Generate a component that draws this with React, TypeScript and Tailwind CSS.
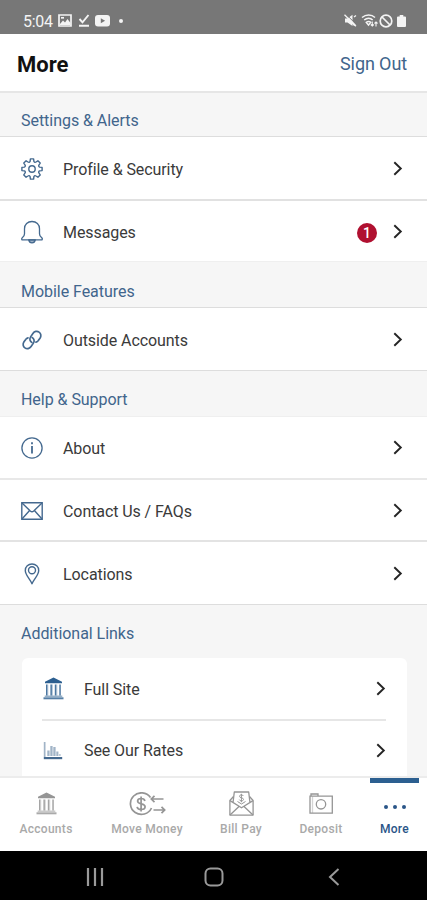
import React from "react";

type IconProps = {
  className?: string;
};

type RowProps = {
  label: string;
  icon: React.ReactNode;
  badge?: number;
  className?: string;
};

const GearIcon = () => (
  <svg width={22} height={22} viewBox="0 0 22 22" fill="none" stroke="currentColor" strokeWidth={1.4} strokeLinejoin="round">
    <path d="M9.4 .9h3.200L12.900 3.400Q13.700 4.900 15 4L16.900 2.800 19.200 5.100 18 7Q17.100 8.300 18.600 9.100L21.100 9.400V12.600L18.600 12.900Q17.100 13.700 18 15L19.200 16.900 16.900 19.200 15 18Q13.700 17.100 12.900 18.600L12.600 21.100H9.400L9.100 18.600Q8.300 17.100 7 18L5.100 19.200 2.800 16.900 4 15Q4.900 13.700 3.400 12.900L.9 12.600V9.400L3.400 9.100Q4.900 8.300 4 7L2.800 5.100 5.100 2.800 7 4Q8.300 4.900 9.100 3.400z" />
    <circle cx={11} cy={11} r={3.200} />
  </svg>
);

const BellIcon = () => (
  <svg width={22} height={24} viewBox="0 0 22 24" fill="none" stroke="currentColor" strokeWidth={1.3} strokeLinejoin="round">
    <path d="M11 1.500c-4.400 0-7.500 2.900-7.500 7.200v5.100c0 1.900-.8 2.900-2 3.800-.9.700-1 1.500-.5 2.200h20c.5-.7.4-1.500-.5-2.200-1.200-.9-2-1.900-2-3.800V8.700c0-4.300-3.100-7.200-7.500-7.200z" />
    <path d="M7.700 19.800c.4 2 1.600 3 3.300 3s2.900-1 3.300-3z" fill="currentColor" fillOpacity={0.5} />
  </svg>
);

const LinkIcon = () => (
  <svg width={20} height={20} viewBox="0 0 20 20" fill="none" stroke="currentColor" strokeWidth={1.700} strokeLinecap="round">
    <path d="M9.900 12.400C7.900 11.400 7.200 9 8.600 6.900L10.900 3.500c1.500-2.200 4.200-2.800 6.200-1.400 2 1.300 2.300 4 .9 6.100L16.300 10.600c-.6.900-1.400 1.400-2.300 1.600" />
    <path d="M10.100 7.600c2 1 2.700 3.400 1.300 5.500L9.100 16.500c-1.500 2.200-4.200 2.800-6.200 1.400-2-1.300-2.300-4-.9-6.100L3.700 9.400c.6-.9 1.400-1.400 2.300-1.600" />
  </svg>
);

const InfoIcon = () => (
  <svg width={22} height={22} viewBox="0 0 22 22" fill="none" stroke="currentColor" strokeWidth={1.300}>
    <circle cx={11} cy={11} r={10.100} />
    <path d="M11 9v7.500" strokeWidth={1.800} />
    <path d="M11 5.300v2" strokeWidth={1.800} />
  </svg>
);

const MailIcon = () => (
  <svg width={22} height={18} viewBox="0 0 22 18" fill="none" stroke="currentColor" strokeWidth={1.400}>
    <path d="M.8.8h20.400v16.400H.8z" />
    <path d="M1 1l8.300 8c1.100 1 2.300 1 3.400 0L21 1M1 17l7.600-8.500M21 17l-7.600-8.500" />
  </svg>
);

const PinIcon = () => (
  <svg width={16} height={22} viewBox="0 0 16 22" fill="none" stroke="currentColor" strokeWidth={1.400} strokeLinejoin="round">
    <path d="M8 20.800C6.200 16 1.300 12.300 1.300 7.500 1.300 3.700 4.200 1 8 1s6.700 2.700 6.700 6.500c0 4.800-4.900 8.500-6.700 13.300z" />
    <circle cx={8} cy={7.200} r={3.500} />
  </svg>
);

const BankIcon = ({ className }: IconProps) => (
  <svg width={21} height={23} viewBox="0 0 21 23" fill="currentColor" className={className}>
    <path d="M10.500 .5L2 4.800v1.400h17V4.800z" />
    <path d="M3 7.500h1.400v11H3zM7.400 7.500h1.500v11H7.400zM11.800 7.500h1.500v11h-1.500zM16.300 7.500h1.500v11h-1.500z" opacity={0.850} />
    <path d="M4.400 7.500h.9v11h-.9zM8.900 7.500h1v11h-1zM13.300 7.500h1v11h-1z" opacity={0.350} />
    <path d="M1.700 18.500h17.600v1.500H1.700z" opacity={0.500} />
    <path d="M.5 20.300h20v2H.5z" opacity={0.800} />
  </svg>
);

const ChartIcon = () => (
  <svg width={20} height={19} viewBox="0 0 20 19" fill="currentColor">
    <path d="M.8 1h1.700v15H.8zM4.300 9.500h2.300V15H4.300zM7.300 5h2.300v10H7.300zM10.300 6h2.300v9h-2.300zM13.300 10.500h2.100V15h-2.100z" opacity={0.500} />
    <path d="M.8 16h18.400v2.200H.8z" />
    <path d="M15.900 13h1.800v2h-1.800z" opacity={0.350} />
  </svg>
);

const TransferIcon = () => (
  <svg width={37} height={24} viewBox="0 0 37 24" fill="none" stroke="currentColor" strokeWidth={1.700}>
    <path d="M21.500 5.500A11 10.800 0 1 0 22.500 16" />
    <path d="M15.900 9c-.3-1.700-1.700-2.500-3.700-2.500-2.200 0-3.600 1-3.600 2.600s1.300 2.300 3.600 2.800 3.900 1.100 3.900 2.900-1.600 2.700-3.900 2.700-3.800-.9-4.100-2.700M12.100 4.500v15" />
    <path d="M34.500 7H22M25.500 3.800L22.300 7l3.200 3.200M24.500 18H36M32.500 14.800l3.200 3.200-3.200 3.200" />
  </svg>
);

const BillIcon = () => (
  <svg width={25} height={25} viewBox="0 0 25 25" fill="none" stroke="currentColor" strokeWidth={1.300} strokeLinejoin="round">
    <path d="M4.500 5.500L.9 9.500v14.600h23.200V9.500L20.500 5.500" />
    <path d="M4 11.800L5.300 1h14.400L21 11.800M1 9.600l11.500 7.200L24 9.600M1 24l9-8.500M24 24l-9-8.500" />
    <path d="M14.400 5c-.4-.8-1.100-1.100-2-1.100-1.100 0-1.900.5-1.900 1.400 0 2 4 1 4 3.100 0 1-.9 1.500-2 1.500s-1.900-.4-2.200-1.300M12.400 2.800v8.400M8.500 10.500l4 2.500 4-2.500" strokeWidth={1} />
  </svg>
);

const CameraIcon = () => (
  <svg width={24} height={21} viewBox="0 0 24 21" fill="none" stroke="currentColor" strokeWidth={1.300}>
    <path d="M1 3.200h22.300v16.900H1zM2 3V1h7v2" />
    <path d="M3.500 3.500V20" opacity={0.400} />
    <circle cx={12} cy={11.300} r={4.700} />
  </svg>
);

const Chevron = () => (
  <svg width={10} height={15} viewBox="0 0 10 15" fill="none" stroke="currentColor" strokeWidth={1.900} className="text-[#252525]">
    <path d="M1.300 1.200l6.500 6.300-6.500 6.300" />
  </svg>
);

const SectionTitle = ({ children }: { children: React.ReactNode }) => (
  <h2 className="text-base leading-5 tracking-[-0.04px] text-[#41658c]">{children}</h2>
);

const Row = ({ label, icon, badge, className = "" }: RowProps) => (
  <li className={`flex items-center ${className}`}>
    <span className="flex w-[22px] justify-center text-[#44698f]">{icon}</span>
    <span className="ml-5 flex-1 pt-0.5 text-base leading-5 tracking-[-0.08px]">{label}</span>
    {badge && (
      <span className="mt-0.5 mr-4 flex size-5 items-center justify-center rounded-full bg-[#b01030] text-sm font-medium text-white">
        {badge}
      </span>
    )}
    <Chevron />
  </li>
);

const StatusBar = () => (
  <div className="flex h-[34px] items-center bg-[#777777] pt-[7px] pr-[21px] pl-[23px] text-[#f4f4f4]">
    <span className="w-[35px] pt-0.5 text-base leading-5 tracking-[-0.3px]">5:04</span>
    <svg width={14} height={13} viewBox="0 0 14 13" fill="none" stroke="currentColor" strokeWidth={1.700}>
      <path d="M1 1h12v11H1z" />
      <path d="M2 10l3-3.500 2 2L9.500 5l3 4v2H2z" fill="currentColor" stroke="none" />
      <path d="M3 3.800h3" />
    </svg>
    <svg width={12} height={13} viewBox="0 0 12 13" fill="none" stroke="currentColor" strokeWidth={1.900} className="ml-[6px]">
      <path d="M1.500 5l3 3.300L10.500 1M1 11.700h10" />
    </svg>
    <svg width={15} height={12} viewBox="0 0 15 12" className="ml-[5px]">
      <rect width={15} height={11.500} rx={3} fill="currentColor" />
      <path d="M5.800 3.300v5l4.300-2.500z" fill="#777777" />
    </svg>
    <span className="ml-[9px] size-1 rounded-full bg-current" />
    <div className="ml-auto flex items-center">
      <svg width={13} height={13} viewBox="0 0 13 13" fill="currentColor">
        <path d="M1 4.500h2.500L8.500 0.800v11.200L3.500 8.500H1z" />
        <path d="M7.500 7.500l3.500 4" stroke="currentColor" strokeWidth={2} />
        <path d="M1.800 0l10.500 10.500" stroke="#777777" strokeWidth={1} />
        <path d="M.5 .8l11.500 11.500M10 3l2-1.500" stroke="currentColor" strokeWidth={1.300} />
      </svg>
      <svg width={17} height={13} viewBox="0 0 17 13" fill="none" stroke="currentColor" strokeWidth={1.500} className="ml-1">
        <path d="M1 3.500c4-3.300 9.500-3.300 13 0M3.200 6c2.700-2.200 6.200-2.200 8.500 0M5.300 8.400c1.500-1.200 3.200-1.200 4.400 0L7.500 11z" />
        <path d="M11.300 7.500v4.500M9.800 10.500l1.500 1.500 1.500-1.500M15 12.500V8M13.500 9.500L15 8l1.500 1.500" strokeWidth={1.100} />
      </svg>
      <svg width={14} height={14} viewBox="0 0 14 14" fill="none" stroke="currentColor" strokeWidth={1.700} className="ml-px">
        <circle cx={7} cy={7} r={5.800} />
        <path d="M3 3l8 8" />
      </svg>
      <svg width={9} height={12} viewBox="0 0 9 13" fill="currentColor" preserveAspectRatio="none" className="mt-px ml-[4px]">
        <path d="M2.700 0h3.600v1.700H8A1 1 0 0 1 9 2.700V12a1 1 0 0 1-1 1H1a1 1 0 0 1-1-1V2.700a1 1 0 0 1 1-1h1.700z" />
      </svg>
    </div>
  </div>
);

const tabs = [
  { label: "Accounts", width: "w-[92px]", icon: <BankIcon /> },
  { label: "Move Money", width: "w-[110px]", icon: <TransferIcon /> },
  { label: "Bill Pay", width: "w-[78px]", icon: <BillIcon /> },
  { label: "Deposit", width: "w-[82px]", icon: <CameraIcon /> },
];

const TabBar = () => (
  <nav className="flex h-[75px] border-t-2 border-[#ececec] bg-white text-xs leading-4 font-medium tracking-[0.3px] text-[#a9a9a9]">
    {tabs.map((tab) => (
      <div key={tab.label} className={`flex flex-col items-center pt-[13px] ${tab.width}`}>
        <span className="flex h-[25px] items-center text-[#959595]">{tab.icon}</span>
        <span className="mt-[5px] whitespace-nowrap">{tab.label}</span>
      </div>
    ))}
    <div className="flex w-[65px] flex-col items-center text-[#2a5588]">
      <span className="h-[5px] w-[49px] bg-[#2c5f90]" />
      <span className="mt-[22px] flex gap-[5px]">
        <span className="size-1 rounded-full bg-current" />
        <span className="size-1 rounded-full bg-current" />
        <span className="size-1 rounded-full bg-current" />
      </span>
      <span className="mt-3">More</span>
    </div>
  </nav>
);

const SystemNav = () => (
  <div className="flex h-[49px] items-center bg-black pt-0.5 text-[#9a9a9a]">
    <svg width={18} height={18} viewBox="0 0 18 18" stroke="currentColor" strokeWidth={2.200} className="ml-[86px]">
      <path d="M2 0v18M9 0v18M16 0v18" />
    </svg>
    <svg width={20} height={20} viewBox="0 0 20 20" fill="none" stroke="currentColor" strokeWidth={2} className="ml-[100px]">
      <rect x={1.500} y={1.500} width={17} height={17} rx={5} />
    </svg>
    <svg width={12} height={18} viewBox="0 0 12 18" fill="none" stroke="currentColor" strokeWidth={2} className="ml-[104px]">
      <path d="M10.500 1L2 9l8.500 8" />
    </svg>
  </div>
);

const App = () => {
  return (
    <div className="flex h-[900px] w-[427px] flex-col overflow-hidden bg-[#f6f6f6] font-['Roboto',sans-serif] text-[#3a3a3a]">
      <StatusBar />
      <header className="flex h-[59px] items-center justify-between border-b-2 border-[#e6e6e6] bg-white pt-[3px] pr-5 pl-[17px]">
        <h1 className="text-[22px] font-bold text-[#111111]">More</h1>
        <a className="text-lg tracking-[-0.1px] text-[#41658c]">Sign Out</a>
      </header>
      <main className="min-h-0 flex-1 overflow-hidden">
        <div className="h-[44px] border-b border-[#dddddd] pt-[18px] pl-[21px]">
          <SectionTitle>Settings &amp; Alerts</SectionTitle>
        </div>
        <ul className="bg-white">
          <Row label="Profile & Security" icon={<GearIcon />} className="h-[64px] border-b-2 border-[#e1e1e1] pt-px pr-6 pl-[21px]" />
          <Row label="Messages" icon={<BellIcon />} badge={1} className="h-[60px] pt-px pr-6 pl-[21px]" />
        </ul>
        <div className="h-[47px] border-t border-b border-t-[#efefef] border-b-[#dddddd] pt-5 pl-[21px]">
          <SectionTitle>Mobile Features</SectionTitle>
        </div>
        <ul className="bg-white">
          <Row label="Outside Accounts" icon={<LinkIcon />} className="h-[62px] pt-px pr-6 pl-[21px]" />
        </ul>
        <div className="h-[47px] border-t border-b border-t-[#dddddd] border-b-[#efefef] pt-[19px] pl-[21px]">
          <SectionTitle>Help &amp; Support</SectionTitle>
        </div>
        <ul className="bg-white">
          <Row label="About" icon={<InfoIcon />} className="h-[63px] border-b-2 border-[#e8e8e8] pr-6 pl-[21px]" />
          <Row label="Contact Us / FAQs" icon={<MailIcon />} className="h-[62px] border-b-2 border-[#e3e3e3] pt-px pr-6 pl-[21px]" />
          <Row label="Locations" icon={<PinIcon />} className="h-[62px] pt-px pr-6 pl-[21px]" />
        </ul>
        <div className="border-t border-[#dddddd] pt-[19px] pr-5 pl-[21px]">
          <SectionTitle>Additional Links</SectionTitle>
          <ul className="mt-[14px] ml-px rounded-t-md bg-white pr-[21px] pl-5">
            <Row label="Full Site" icon={<BankIcon className="text-[#2c5f90]" />} className="h-[63px] border-b-2 border-[#e6e6e6]" />
            <Row label="See Our Rates" icon={<ChartIcon />} className="h-[58px]" />
          </ul>
          <div className="ml-px h-6 bg-white" />
        </div>
      </main>
      <TabBar />
      <SystemNav />
    </div>
  );
};

export default App;
